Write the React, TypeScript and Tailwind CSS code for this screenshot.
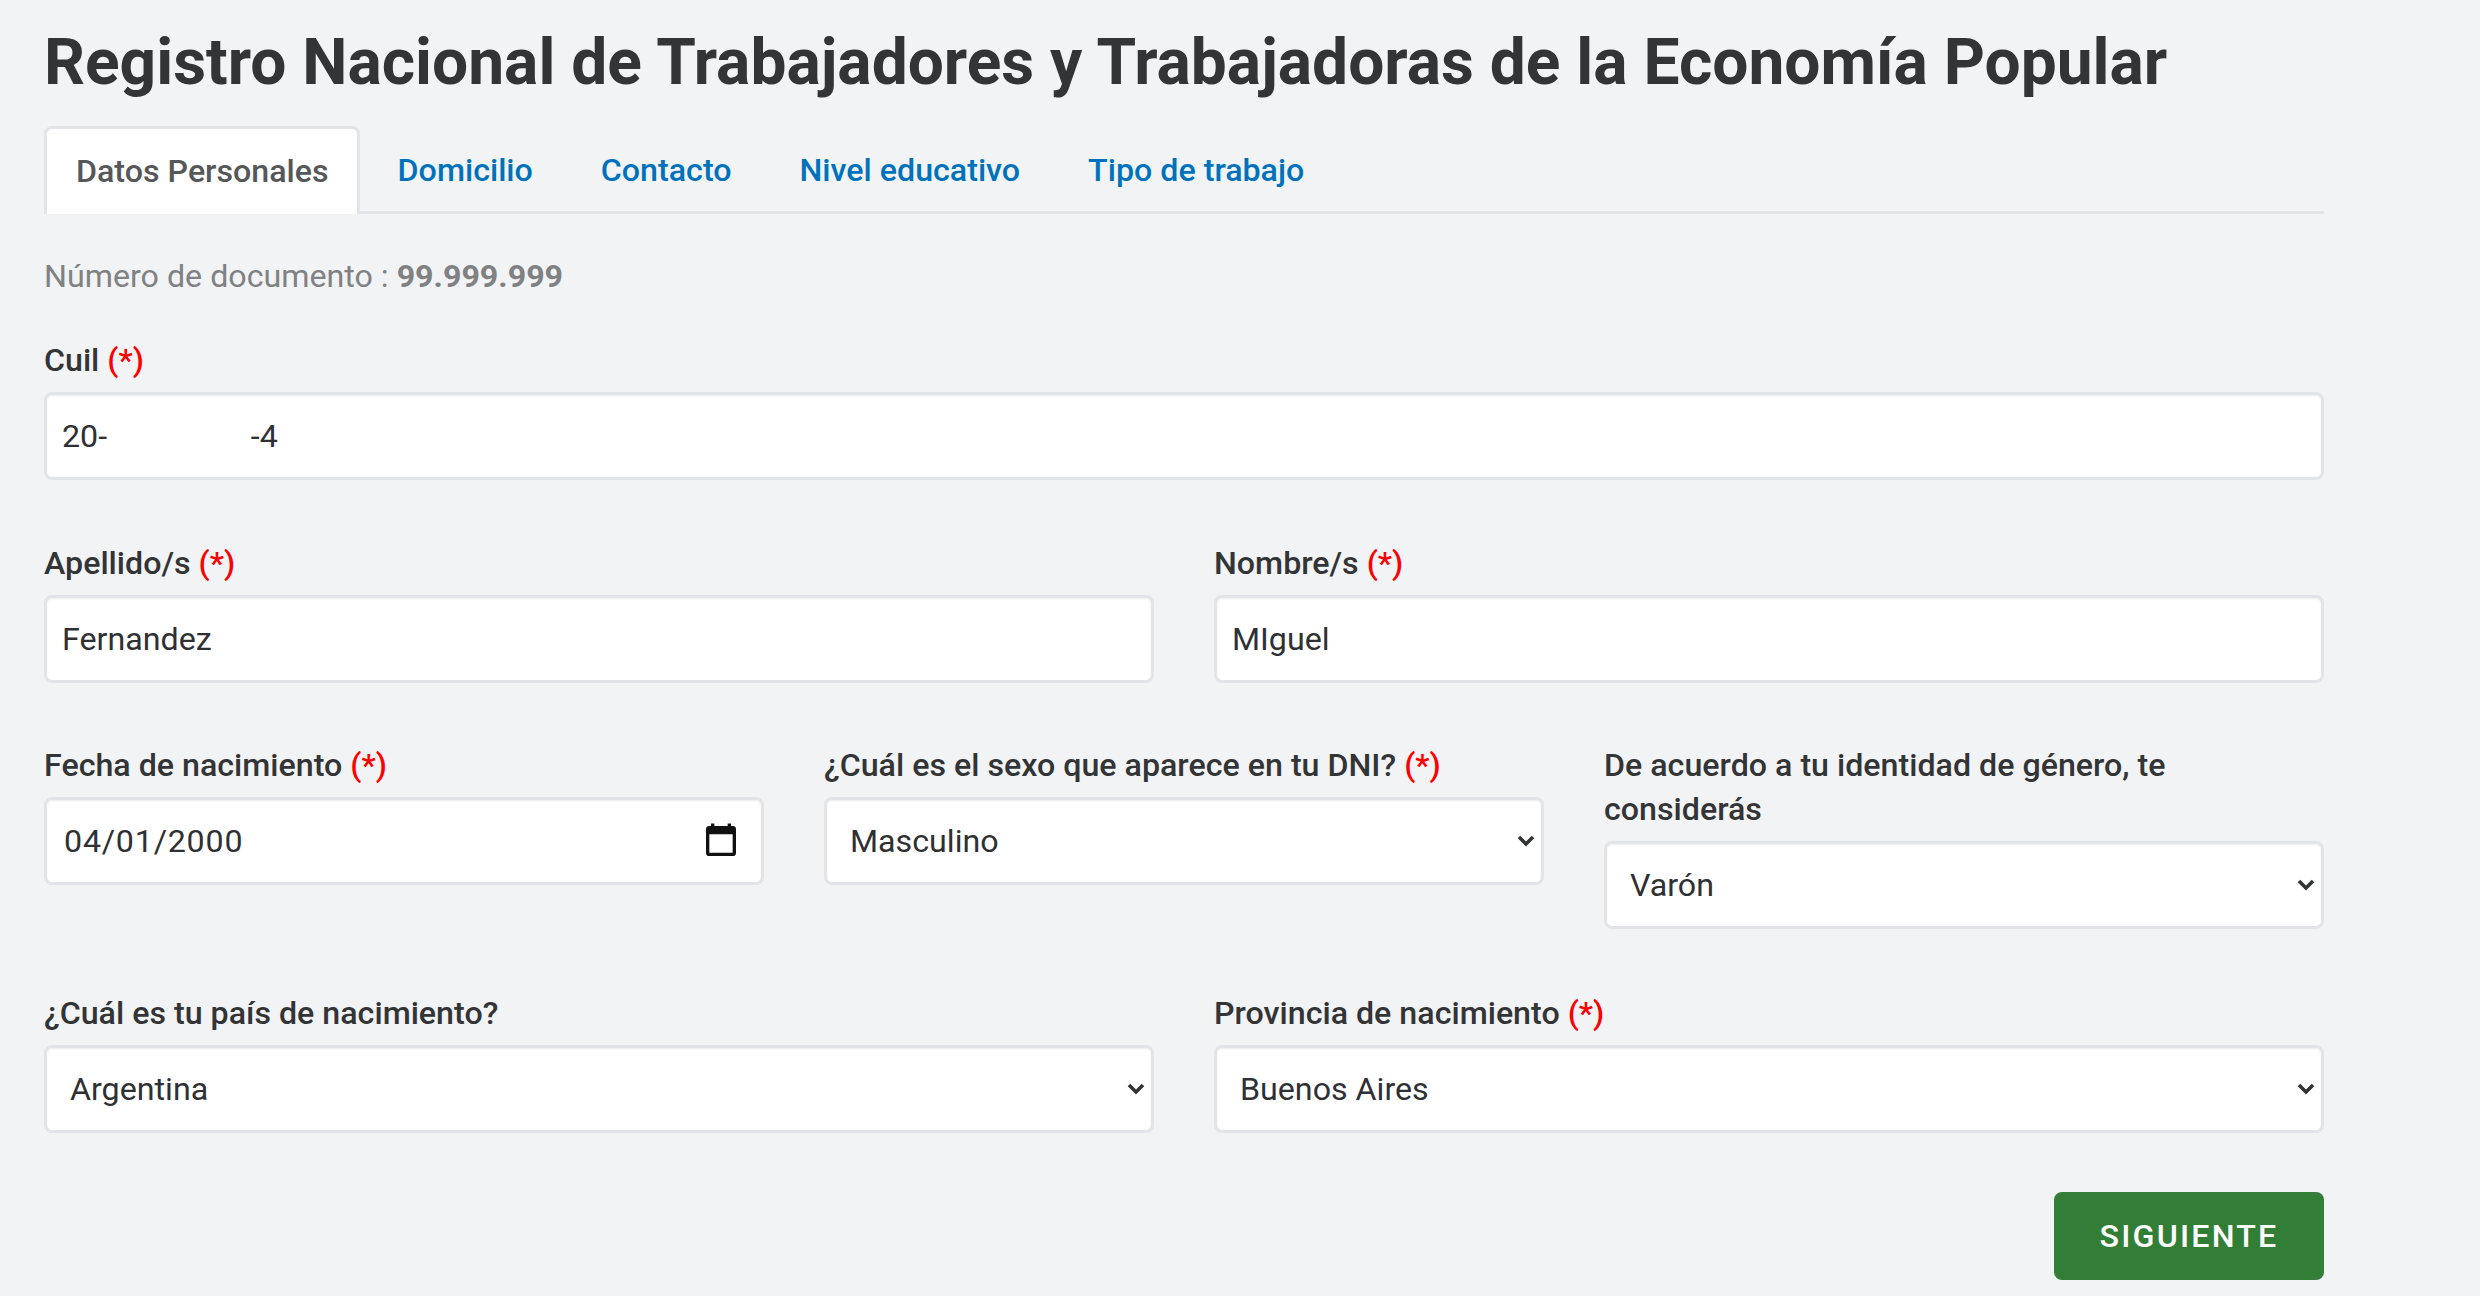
const inputClass =
  "h-[88px] w-full rounded-lg border-[3px] border-[#e2e4e8] bg-white text-[32.2px] text-[#2f3033] shadow-[inset_0_1px_2px_rgba(0,0,0,0.075)] outline-none"

const tabs = ["Domicilio", "Contacto", "Nivel educativo", "Tipo de trabajo"]

function Required() {
  return <span className="text-[#ff0000]">(*)</span>
}

function Label({ text, required }: { text: string; required?: boolean }) {
  return (
    <label className="mb-[10px] block text-[32.2px] leading-[44px] font-medium text-[#333436]">
      {text} {required && <Required />}
    </label>
  )
}

function TextField({ label, value, required }: { label: string; value: string; required?: boolean }) {
  return (
    <div>
      <Label text={label} required={required} />
      <input readOnly value={value} className={`${inputClass} px-[15px]`} />
    </div>
  )
}

function SelectField({ label, value, required }: { label: string; value: string; required?: boolean }) {
  return (
    <div>
      <Label text={label} required={required} />
      <div className="relative">
        <select defaultValue={value} className={`${inputClass} appearance-none pl-[23px]`}>
          <option>{value}</option>
        </select>
        {/* native arrow renders too small here */}
        <svg viewBox="0 0 18 12" className="pointer-events-none absolute top-[38px] right-[9px] h-[12px] w-[18px]" fill="none" stroke="#333436" strokeWidth="3.6">
          <path d="M2 2l7 7 7-7" />
        </svg>
      </div>
    </div>
  )
}

export default function App() {
  return (
    <div className="min-h-[1296px] bg-[#f2f3f5] pl-[44px] pr-[156px] font-['Roboto',sans-serif]">
      <h1 className="pt-[27px] text-[64.05px] leading-[72px] font-bold text-[#333436]">
        Registro Nacional de Trabajadores y Trabajadoras de la Economía Popular
      </h1>

      {/* Tabs */}
      <div className="mt-[27px] flex h-[88px] border-b-[3px] border-[#e2e4e8] text-[32.2px] font-medium">
        <div className="-mb-[3px] mr-[4px] flex h-[88px] items-center rounded-t-lg border-[3px] border-b-0 border-[#e2e4e8] bg-white pl-[29px] pr-[28px] text-[#555759]">
          Datos Personales
        </div>
        {tabs.map((tab) => (
          <a key={tab} className="flex items-center px-[34px] pt-[4px] text-[#0072bb]">
            {tab}
          </a>
        ))}
      </div>

      <p className="mt-[40px] text-[32.2px] leading-[44px] text-[#808183]">
        Número de documento : <b className="font-bold">99.999.999</b>
      </p>

      <div className="mt-[40px]">
        <Label text="Cuil" required />
        <input readOnly value="20-                  -4" className={`${inputClass} px-[15px]`} />
      </div>

      <div className="mt-[61px] grid grid-cols-2 gap-x-[60px]">
        <TextField label="Apellido/s" value="Fernandez" required />
        <TextField label="Nombre/s" value="MIguel" required />
      </div>

      <div className="mt-[60px] grid grid-cols-3 gap-x-[60px]">
        <div>
          <Label text="Fecha de nacimiento" required />
          <div className={`${inputClass} flex items-center justify-between pl-[17px] pr-[20px]`}>
            <span className="tracking-[0.8px]">04/01/2000</span>
            <svg viewBox="0 0 24 24" className="h-[40px] w-[40px]" fill="#111">
              <path d="M19 3h-1V1.5h-2V3H8V1.5H6V3H5a2 2 0 0 0-2 2v14a2 2 0 0 0 2 2h14a2 2 0 0 0 2-2V5a2 2 0 0 0-2-2Zm0 16H5V8h14v11Z" />
            </svg>
          </div>
        </div>
        <SelectField label="¿Cuál es el sexo que aparece en tu DNI?" value="Masculino" required />
        <SelectField label="De acuerdo a tu identidad de género, te considerás" value="Varón" />
      </div>

      <div className="mt-[62px] grid grid-cols-2 gap-x-[60px]">
        <SelectField label="¿Cuál es tu país de nacimiento?" value="Argentina" />
        <SelectField label="Provincia de nacimiento" value="Buenos Aires" required />
      </div>

      <div className="mt-[59px] flex justify-end">
        <button className="h-[88px] w-[270px] rounded-lg bg-[#327e36] text-[32.2px] font-medium tracking-[2.2px] text-white">
          SIGUIENTE
        </button>
      </div>
    </div>
  )
}
